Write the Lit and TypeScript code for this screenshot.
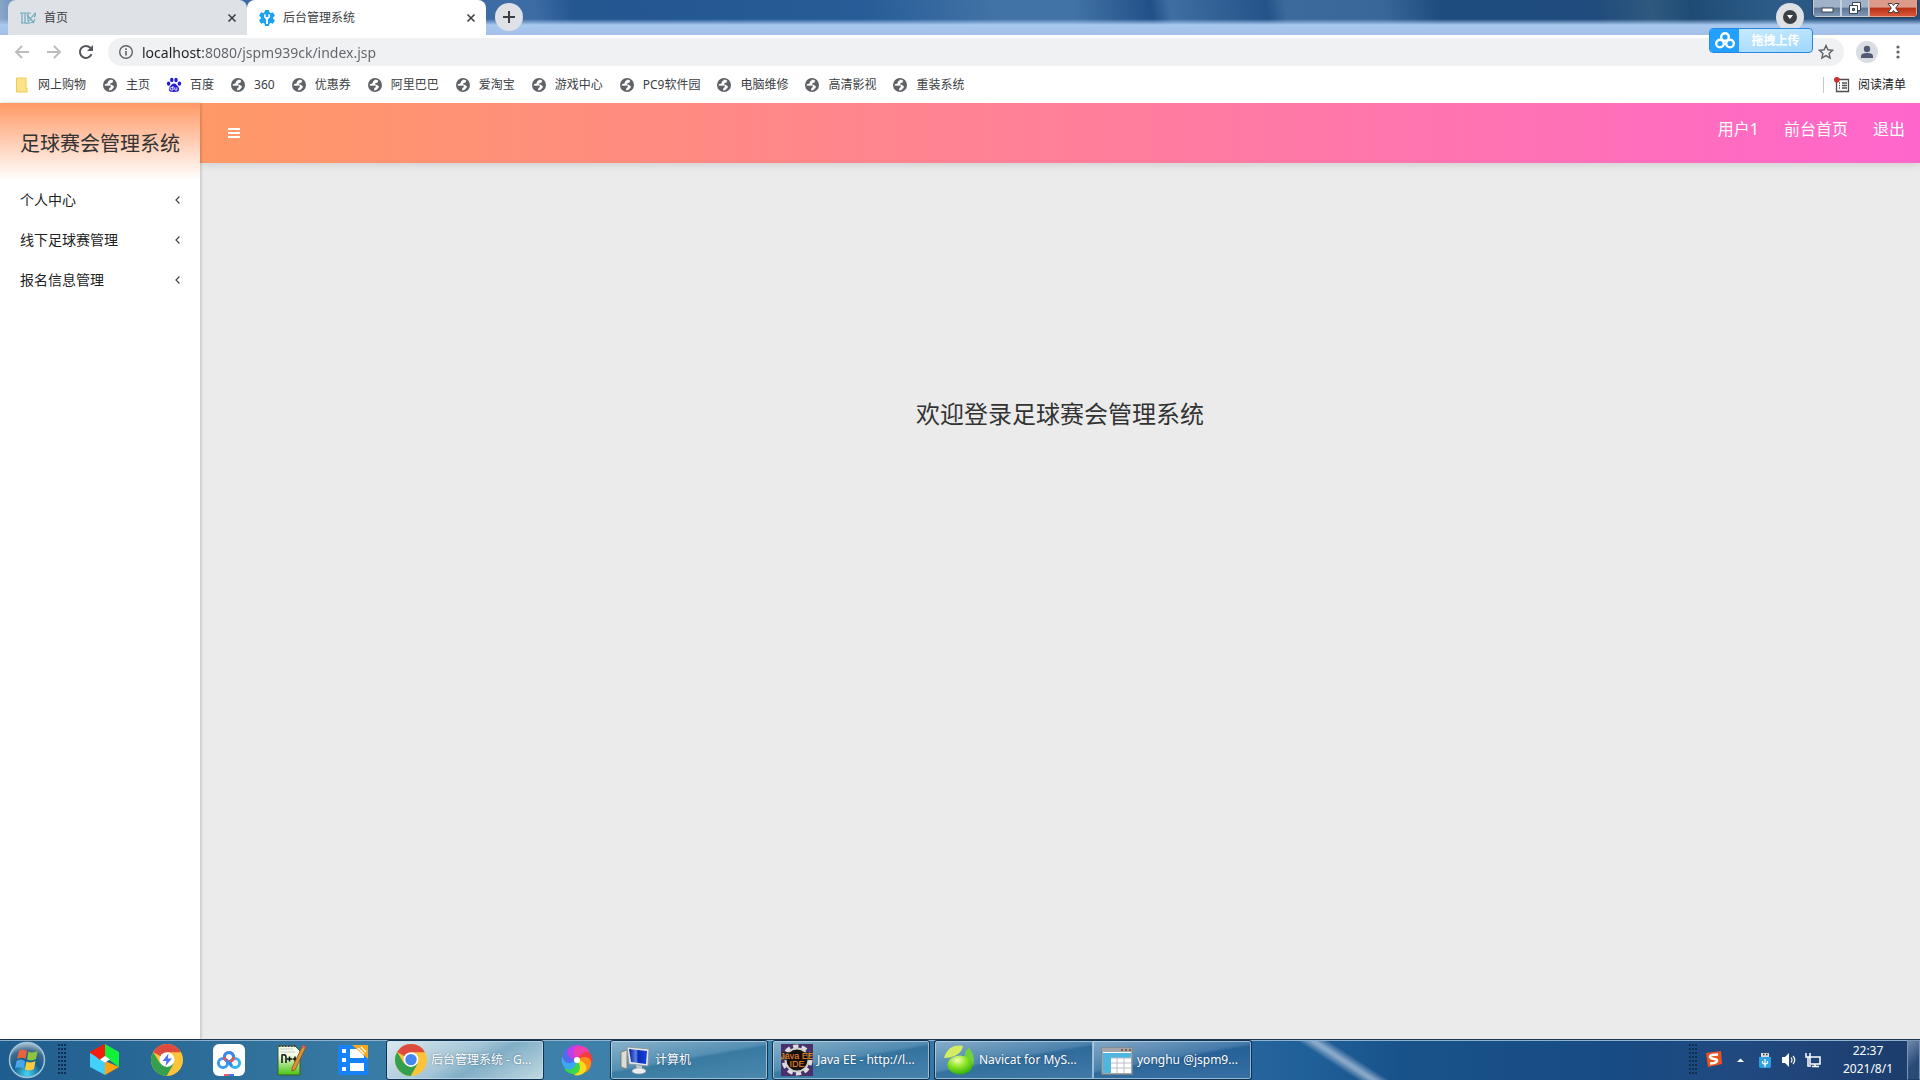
import { LitElement, html, svg, css } from "lit";
import { customElement } from "lit/decorators.js";

const globe = html`<svg class="ico16" viewBox="0 0 16 16" aria-hidden="true">
  <circle cx="8" cy="8" r="7" fill="#5f6368"/>
  <path d="M8.6 2.6 6.2 4.2 5.4 6.4 3 7.2 2.6 8.6 5 8.8 8.4 8.6 9 10 7.4 11 7 13.4 9.4 13 11.4 11 12 9.4 9.8 7.8 8 7.4 8.4 6.2 10.6 5.4 11.2 3.6Z" fill="#fff"/>
</svg>`;

const folder = html`<svg class="ico16" viewBox="0 0 16 16" aria-hidden="true">
  <path d="M2.5 1h9.5v10h1v4H2.5z" fill="#fde28a" stroke="#ecc94f" stroke-width="1"/>
</svg>`;

const paw = html`<svg class="ico16" viewBox="0 0 16 16" aria-hidden="true">
  <g fill="#2319dc">
    <ellipse cx="2.6" cy="6.6" rx="1.7" ry="2.2"/><ellipse cx="5.8" cy="3" rx="1.7" ry="2.3"/>
    <ellipse cx="10" cy="3" rx="1.7" ry="2.3"/><ellipse cx="13.4" cy="6.6" rx="1.7" ry="2.2"/>
    <path d="M8 6.4c2 0 2.6 1.800 4 3.200 1.600 1.500 1.600 5-1 5.200-1.400.1-4.600.1-6 0-2.600-.2-2.600-3.700-1-5.200C5.400 8.200 6 6.400 8 6.400z"/>
  </g>
  <path d="M7 9v4H5.200a1.100 1.100 0 0 1 0-2.400H7M8.800 10.400v1.800q0 .9.900.9h1.200v-2.700" fill="none" stroke="#fff" stroke-width=".9"/>
</svg>`;

const closeX = html`<svg class="ico10" viewBox="0 0 10 10" aria-hidden="true"><path d="M1.500 1.500l7 7m0-7l-7 7" stroke="#3c4043" stroke-width="1.600"/></svg>`;

const gear = html`<svg class="ico16" viewBox="0 0 16 16" aria-hidden="true">
  <g fill="#1ba1f2">
    <circle cx="8" cy="8" r="6.200"/>
    ${[0, 60, 120, 180, 240, 300].map((a) => svg`<path d="M5.400 3 6 0h4l.6 3z" transform="rotate(${a} 8 8)"/>`)}
  </g>
  <path d="M5 4.600v2.600L7 9.300V14h2V9.300l2-2.100V4.600L9.300 4.300V7H6.700V4.300z" fill="#fff"/>
</svg>`;

const chromeLogo = (bolt: boolean) => html`<svg class="ico32" viewBox="0 0 32 32" aria-hidden="true">
  <circle cx="16" cy="16" r="16" fill="#fbc43a"/>
  <path d="M16 16 2.140 8A16 16 0 0 1 29.900 8.200H16z" fill="#df4a3e"/>
  <path d="M2.140 8A16 16 0 0 0 15.600 32L22.500 20 16 16 9.300 19.800z" fill="#34a04e"/>
  <circle cx="16" cy="15.600" r="7.400" fill="#fff"/>
  ${bolt
    ? svg`<path d="M17.500 9.500 11.500 17h4l-1 5 6.500-7.500h-4.200z" fill="#4a73f2"/>`
    : svg`<circle cx="16" cy="15.600" r="5.700" fill="#4688f1"/>`}
</svg>`;

const cloud = html`<svg class="ico32" viewBox="0 0 32 32" aria-hidden="true">
  <rect width="32" height="32" rx="6" fill="#fff"/>
  <g fill="none" stroke-width="3"><circle cx="10" cy="19" r="4.600" stroke="#3a9cf0"/><circle cx="22" cy="19" r="4.600" stroke="#35b4f2"/><circle cx="16" cy="13" r="4.600" stroke="#e8505c"/><path d="M11.400 13a4.600 4.600 0 0 1 9.200 0M13.500 16 19 22" stroke="#2f8ff0"/></g>
  <path d="M11 30h5v2h-5z" fill="#ef5b62"/><path d="M16 30h5v2h-5z" fill="#3a7cf0"/>
</svg>`;

const cube = html`<svg class="ico32" viewBox="0 0 32 32" aria-hidden="true">
  <path d="M16 0 1 8v9l15-4z" fill="#f21d0c"/><path d="M16 0l14 8v15L16 13z" fill="#12f03c"/>
  <path d="M30 23l-14 8V17z" fill="#ffa20d"/><path d="M1 9l15 8v14L1 23z" fill="#43d0fb"/>
  <path d="M1 8l10 8 5-3.500V0z" fill="#f21d0c"/>
  <path d="M16 12l5 3.500-5 3-5-3z" fill="#fff"/>
</svg>`;

const notepad = html`<svg class="ico32" viewBox="0 0 32 32" aria-hidden="true">
  <defs><linearGradient id="np" x2="0" y2="1"><stop offset="0.300" stop-color="#f4fbe8"/><stop offset="1" stop-color="#47c40e"/></linearGradient></defs>
  <path d="M3 2h17l5 5v24H3z" fill="url(#np)" stroke="#3a5c30" stroke-width="1"/>
  <path d="M5 5h13M5 8h15" stroke="#c8c8c8"/><path d="M4 2h18" stroke="#444" stroke-width="2" stroke-dasharray="1.500 1.500"/>
  <path d="M7 19v-8q4-1 4 2v6M12 15h5m-2.500-2.500v5M17.500 15h5M20 12.500v5" fill="none" stroke="#111" stroke-width="1.500"/>
  <path d="M28 1l3 2-11 23-3 1 0-3z" fill="#dd9436" stroke="#855018" stroke-width=".8"/><path d="M28 1l3 2-1 2-3-2z" fill="#d95c60"/>
</svg>`;

const film = html`<svg class="ico32" viewBox="0 0 32 32" aria-hidden="true">
  <rect x="1" y="1" width="30" height="30" rx="2" fill="#1682f7"/>
  <path d="M5 5h4v4H5zM5 14h4v4H5zM5 23h4v4H5zM13 5h8l6 7v2H13zM13 19h14v8H13z" fill="#fff"/>
  <path d="M15 1h16v14z" fill="#f6a81d"/><path d="M21 4l6 6M24 3l5 5" stroke="#fff" stroke-width="1.400"/>
</svg>`;

const petals = ["#f33e3d", "#ff8a19", "#f7dc17", "#38d84a", "#3aa8f0", "#5868ee", "#c33de8", "#f03fa8"];
const pinwheel = html`<svg class="ico32" viewBox="0 0 32 32" aria-hidden="true">
  ${petals.map((c, i) => svg`<path d="M16 16C17 8 23 4 28 8c3 3 4 7 3 11-4-4-9-5-15-3z" fill=${c} transform="rotate(${i * 45} 16 16)"/>`)}
  <circle cx="16" cy="16" r="3" fill="#fff"/>
</svg>`;

const computer = html`<svg class="ico32" viewBox="0 0 32 32" aria-hidden="true">
  <defs><linearGradient id="scr"><stop offset="0" stop-color="#0a1c90"/><stop offset=".4" stop-color="#5c86ec"/><stop offset=".5" stop-color="#0b2bb8"/><stop offset="1" stop-color="#1742d8"/></linearGradient></defs>
  <path d="M2 8l6-2v19l-6-2z" fill="#dcdcd4" stroke="#75756e" stroke-width=".8"/>
  <path d="M8 3l22 2-1 17L10 20z" fill="#e4e8ea" stroke="#8a9096" stroke-width=".8"/>
  <path d="M10 5l18 2-1 13-15-2z" fill="url(#scr)"/>
  <path d="M17 21l6 1v4h-5z" fill="#c8ccd0"/><ellipse cx="20" cy="27" rx="7" ry="3" fill="#eceeee" stroke="#9a9fa3" stroke-width=".6"/>
</svg>`;

const javaEE = html`<svg class="ico32" viewBox="0 0 32 32" aria-hidden="true">
  <rect width="32" height="32" fill="#47306b"/>
  <circle cx="16" cy="16" r="13" fill="none" stroke="#dedede" stroke-width="5" stroke-dasharray="5 3.170"/>
  <circle cx="16" cy="16" r="11.500" fill="#17130f" stroke="#d0d0d0" stroke-width="2"/>
  <path d="M1 8h30v8H1z" fill="#17130f" opacity=".7"/>
  <text class="glyph" x="16" y="15" text-anchor="middle" fill="#ff8a1c" font-size="9">Java EE</text>
  <text class="glyph" x="16" y="23" text-anchor="middle" fill="#ff8a1c" font-size="9">IDE</text>
</svg>`;

const navicat = html`<svg class="ico32" viewBox="0 0 32 32" aria-hidden="true">
  <defs><radialGradient id="nv" cx=".4" cy=".25" r=".8"><stop offset="0" stop-color="#f0ffb4"/><stop offset=".45" stop-color="#8fe526"/><stop offset="1" stop-color="#24a70b"/></radialGradient></defs>
  <path d="M1 14C4 4 11 0 20 2c-1 6-7 12-19 12z" fill="#d4ec62"/>
  <path d="M22 13c-1-4 1-7 4-9 4 4 6 10 4 18z" fill="#6fd43c"/>
  <ellipse cx="17" cy="21" rx="12.500" ry="9.500" fill="url(#nv)"/>
</svg>`;

const table = html`<svg class="ico32" viewBox="0 0 32 32" aria-hidden="true">
  <rect x="1" y="4" width="30" height="26" fill="#fff" stroke="#84888d" stroke-width="1.500"/>
  <path d="M1 4h30v4H1z" fill="#a6a5a8"/><path d="M2 9h28v5H10v15H2z" fill="#4eb6df"/>
  <path d="M20 6h2m2 0h2m2 0h2" stroke="#7d3e38" stroke-width="1.500"/>
  <path d="M10 14h20M10 19h20M10 24h20M16 14v15M23 14v15" stroke="#b9bec6"/>
</svg>`;

const startOrb = html`<svg class="orb" viewBox="0 0 38 38" aria-hidden="true">
  <defs><radialGradient id="orb" cx=".5" cy=".9" r=".9"><stop offset="0" stop-color="#46d6f5"/><stop offset=".45" stop-color="#145d8e"/><stop offset=".75" stop-color="#3f6b8c"/><stop offset="1" stop-color="#b7cbd8"/></radialGradient></defs>
  <circle cx="19" cy="19" r="17.500" fill="url(#orb)" stroke="#9fc3d8" stroke-width="1.500"/>
  <path d="M11 10q4-3 8 0l-1.500 8q-4-2.500-8.500 0z" fill="#e8633a"/><path d="M20.500 10.500q4 2 9-.5l-1.500 8q-4 2.500-9 .5z" fill="#8cc63d"/>
  <path d="M8.500 20q4-3 8.500 0l-1.500 7.500q-4-2.500-8.500 0z" fill="#4aa6e8"/><path d="M18.500 20.500q4 2 9-.5L26 28q-4 2.500-9 .5z" fill="#fbcb3b"/>
</svg>`;

const bookmarks: [string, unknown][] = [
  ["网上购物", folder], ["主页", globe], ["百度", paw], ["360", globe], ["优惠券", globe],
  ["阿里巴巴", globe], ["爱淘宝", globe], ["游戏中心", globe], ["PC9软件园", globe],
  ["电脑维修", globe], ["高清影视", globe], ["重装系统", globe],
];

const base = css`
  * { box-sizing: border-box; }
  button { border: 0; padding: 0; margin: 0; background: none; font: inherit; color: inherit; cursor: pointer; }
  a { color: inherit; text-decoration: none; }
  svg { display: block; flex: none; }
  .ico10 { width: 10px; height: 10px; }
  .ico16 { width: 16px; height: 16px; }
  .ico20 { width: 20px; height: 20px; }
  .ico32 { width: 32px; height: 32px; }
`;

@customElement("browser-chrome")
class BrowserChrome extends LitElement {
  static styles = [base, css`
    :host { display: block; position: relative; background: #fff; color: #3c4043; font-size: 12px; line-height: 20px; }
    .titlebar {
      display: flex; align-items: flex-start; height: 35px; padding-left: 8px;
      background:
        linear-gradient(to bottom, transparent 19px, #a9c9ef 25px, #a3bfe8 35px),
        linear-gradient(80deg, #8fa9cc 0%, #3c6ca5 3%, #3d6ca4 28%, #245690 30%, #265c97 45%, #4273a6 52%, #4273a6 56%, #205087 60%, #3f6ea1 61%, #235389 66%, #3d6a9c 67%, #3a6799 72%, #1f4c7e 75%, #1f4b7d 83%, #30597f 86%, #1e4b75 88%, #2d5b88 92%, #284f7c 100%);
    }
    .tabs { display: flex; }
    .tab { display: flex; align-items: center; gap: 8px; width: 239px; height: 35px; padding: 0 10px 0 12px; border-radius: 8px 8px 0 0; background: #dee1e6; }
    .tab.active { background: #fff; }
    .tab span { flex: 1; }
    .new, .search { width: 28px; height: 28px; margin-top: 3px; border-radius: 50%; background: #dee1e6; display: grid; place-items: center; }
    .new { margin-left: 9px; }
    .right { display: flex; margin-left: auto; gap: 8px; padding-right: 2px; }
    .window { display: flex; height: 18px; border: 1px solid #2b3c50; border-top: 0; border-radius: 0 0 5px 5px; overflow: hidden; }
    .window button { display: grid; place-items: center; width: 28px; border: 1px solid #c3d0de; border-top: 0; background: linear-gradient(#9fb2c8 45%, #5b7593 50%, #7d97b4); }
    .window .shut { width: 48px; border-color: #e5a394; background: linear-gradient(#dc9a88 45%, #b92f14 50%, #d8573a); }
    .toolbar { display: flex; align-items: center; gap: 12px; height: 34px; padding: 0 14px 0 12px; }
    .nav { width: 20px; height: 20px; display: grid; place-items: center; }
    .address { flex: 1; display: flex; align-items: center; height: 28px; padding: 0 10px; border-radius: 14px; background: #f0f1f3; }
    .url {
      flex: 1; min-width: 0; height: 24px; margin-left: 8px; padding: 0; border: 0; outline: 0;
      font: inherit; font-size: 14px; color: transparent;
      background: linear-gradient(to right, #202124 61px, #5f6368 61px); background-clip: text; -webkit-background-clip: text;
    }
    .avatar { width: 22px; height: 22px; border-radius: 50%; background: #dadce3; overflow: hidden; }
    .marks { display: flex; align-items: center; gap: 16px; height: 34px; padding: 0 14px 3px; }
    .marks a { display: flex; align-items: center; gap: 8px; }
    .marks .list { margin-left: auto; padding-left: 10px; border-left: 1px solid #c6c8cb; height: 16px; color: #202124; }
    .upload { position: absolute; right: 107px; top: 28px; display: flex; width: 104px; height: 25px; border: 1px solid #2b87dd; border-radius: 4px; overflow: hidden; background: linear-gradient(170deg, #cdecfe, #9fd8ff); color: #fff; font-weight: 700; line-height: 23px; }
    .upload i { display: grid; place-items: center; width: 29px; height: 23px; background: #22a0ff; }
    .upload span { flex: 1; text-align: center; }
  `];

  render() {
    return html`
      <div class="titlebar">
        <div class="tabs">
          <div class="tab">
            <svg class="ico16" viewBox="0 0 16 16" aria-hidden="true"><path d="M0 3h11M2 3v10m3-10v10m-4 0h9M8 3v8M7 5l7 8m1-10-7 9m7-9q2 1-1 4m-9 6q9 1 10-4" fill="none" stroke="#6faabb" stroke-width="1.200"/></svg>
            <span>首页</span><button aria-label="关闭标签页">${closeX}</button>
          </div>
          <div class="tab active">
            ${gear}
            <span>后台管理系统</span><button aria-label="关闭标签页">${closeX}</button>
          </div>
        </div>
        <button class="new" aria-label="新标签页"><svg class="ico16" viewBox="0 0 16 16"><path d="M8 2v12M2 8h12" stroke="#3c4043" stroke-width="2"/></svg></button>
        <div class="right">
          <button class="search" aria-label="搜索标签页"><svg class="ico16" viewBox="0 0 16 16"><circle cx="8" cy="8" r="7" fill="#3c4043"/><path d="M5 6h6l-3 4z" fill="#fff"/></svg></button>
          <div class="window">
            <button aria-label="最小化"><svg class="ico16" viewBox="0 0 16 16"><rect x="3" y="8" width="11" height="4" fill="#fff" stroke="#3b4654"/></svg></button>
            <button aria-label="还原"><svg class="ico16" viewBox="0 0 16 16"><path d="M5.500 2.500h8v8h-8z" fill="#fff" stroke="#3b4654"/><path d="M2.500 5.500h8v8h-8z" fill="#fff" stroke="#3b4654"/><path d="M5.500 8.500h2v2h-2z" fill="#6b8098" stroke="#3b4654"/></svg></button>
            <button class="shut" aria-label="关闭"><svg class="ico16" viewBox="0 0 16 16"><path d="M3 3.500h4l1.500 2 1.500-2h4L10.700 8l3.300 4.500h-4l-1.500-2-1.500 2H3L6.300 8z" fill="#fff" stroke="#4b3a40"/></svg></button>
          </div>
        </div>
      </div>
      <div class="toolbar">
        <button class="nav" aria-label="后退"><svg class="ico16" viewBox="0 0 16 16"><path d="M15 8H2m6-6L2 8l6 6" fill="none" stroke="#babcbe" stroke-width="1.800"/></svg></button>
        <button class="nav" aria-label="前进"><svg class="ico16" viewBox="0 0 16 16"><path d="M1 8h13M8 2l6 6-6 6" fill="none" stroke="#babcbe" stroke-width="1.800"/></svg></button>
        <button class="nav" aria-label="重新加载"><svg class="ico16" viewBox="0 0 16 16"><path d="M13.500 10.200A6 6 0 1 1 12.300 3.800L14 5.500" fill="none" stroke="#54575b" stroke-width="2"/><path d="M15 1v6H9z" fill="#54575b"/></svg></button>
        <div class="address">
          <svg class="ico16" viewBox="0 0 16 16" aria-hidden="true"><circle cx="8" cy="8" r="6.300" fill="none" stroke="#5f6368" stroke-width="1.400"/><path d="M8 7v4.500M8 4.300v1.700" stroke="#5f6368" stroke-width="1.600"/></svg>
          <input class="url" type="text" aria-label="地址" value="localhost:8080/jspm939ck/index.jsp">
          <button aria-label="收藏"><svg class="ico16" viewBox="0 0 16 16"><path d="M8 1.500l1.900 4.300 4.700.5-3.500 3.100 1 4.600L8 11.600 3.900 14l1-4.600L1.400 6.300l4.700-.5z" fill="none" stroke="#5f6368" stroke-width="1.400"/></svg></button>
        </div>
        <button class="avatar" aria-label="用户"><svg viewBox="0 0 22 22"><circle cx="11" cy="8" r="3.200" fill="#505a73"/><path d="M5 17v-2q0-3 6-3t6 3v2z" fill="#505a73"/></svg></button>
        <button aria-label="菜单"><svg class="ico16" viewBox="0 0 16 16"><g fill="#5f6368"><circle cx="8" cy="3" r="1.600"/><circle cx="8" cy="8" r="1.600"/><circle cx="8" cy="13" r="1.600"/></g></svg></button>
      </div>
      <nav class="marks">
        ${bookmarks.map(([name, icon]) => html`<a href="#">${icon}${name}</a>`)}
        <a class="list" href="#"><svg class="ico16" viewBox="0 0 16 16" aria-hidden="true"><path d="M2.500 2.500h12v12h-12zM5 6h1m2 0h5M5 8.500h1m2 0h5M5 11h1m2 0h5" fill="none" stroke="#4b4e52" stroke-width="1.300"/><circle cx="2.800" cy="2.800" r="2.800" fill="#c9302c"/></svg>阅读清单</a>
      </nav>
      <button class="upload"><i><svg class="ico20" viewBox="0 0 20 20"><g fill="none" stroke="#fff" stroke-width="2.400"><circle cx="10" cy="6" r="3.800"/><circle cx="5" cy="12.500" r="3.800"/><circle cx="15" cy="12.500" r="3.800"/></g></svg></i><span>拖拽上传</span></button>
    `;
  }
}

@customElement("admin-page")
class AdminPage extends LitElement {
  static styles = [base, css`
    :host { display: grid; grid-template-columns: 200px 1fr; background: #ebebeb; color: #333; }
    aside { position: relative; background: #fff; box-shadow: 1px 0 3px rgba(0, 0, 0, .2); }
    h1 { margin: 0; height: 77px; padding: 4px 20px 0; font-size: 20px; font-weight: 400; line-height: 74px; background: linear-gradient(#ff9966, #fff); white-space: nowrap; }
    .item { display: flex; justify-content: space-between; align-items: center; width: 100%; height: 40px; padding: 0 20px 2px; font-size: 14px; color: #222; }
    .body { display: flex; flex-direction: column; }
    header { display: flex; justify-content: space-between; height: 60px; padding: 0 15px 0 25px; background: linear-gradient(to right, #ff9966, #ff66cc); color: #fff; font-size: 16px; box-shadow: 0 2px 8px rgba(0, 0, 0, .12); }
    nav { display: flex; gap: 25px; line-height: 52px; }
    main { flex: 1; padding: 233px 0 0; text-align: center; }
    h2 { margin: 0; font-size: 24px; font-weight: 400; line-height: 36px; }
  `];

  render() {
    return html`
      <aside>
        <h1>足球赛会管理系统</h1>
        ${["个人中心", "线下足球赛管理", "报名信息管理"].map((name) => html`
          <button class="item">${name}<svg width="6" height="10" viewBox="0 0 6 10" aria-hidden="true"><path d="M5.500 2.500 2 6 5.500 9.500" fill="none" stroke="#444" stroke-width="1.200"/></svg></button>`)}
      </aside>
      <div class="body">
        <header>
          <button aria-label="切换菜单"><svg class="ico16" viewBox="0 0 16 16"><path d="M3 4h12M3 8h12M3 12h12" stroke="#fff" stroke-width="2"/></svg></button>
          <nav><a href="#">用户1</a><a href="#">前台首页</a><a href="#">退出</a></nav>
        </header>
        <main><h2>欢迎登录足球赛会管理系统</h2></main>
      </div>`;
  }
}

@customElement("task-bar")
class TaskBar extends LitElement {
  static styles = [base, css`
    :host {
      display: flex; align-items: stretch; height: 40px; color: #fff; font-size: 12px; line-height: 18px;
      border-top: 1px solid #1d3550; box-shadow: inset 0 1px 0 #8fb2cf;
      background:
        linear-gradient(33deg, transparent 68.500%, rgba(180, 200, 222, .7) 69.200%, rgba(180, 200, 222, .7) 69.400%, transparent 70.100%),
        linear-gradient(to right, #1f5d8e 0, #2c6c98 10%, #3e82a9 24%, #3b7ea8 42%, #2f6ba0 60%, #20609a 68%, #19528a 73%, #174b83 84%, #21497f 91%, #1b3c6c 100%);
    }
    .orb { width: 38px; height: 38px; }
    .start { padding: 0 12px 0 8px; }
    .grip { align-self: center; width: 9px; height: 32px; background: radial-gradient(circle at 1px 1px, #0d2f52 1px, transparent 1px) 0 0 / 3px 4px; }
    .pin { width: 62px; display: grid; place-items: center; }
    .pins { display: flex; padding: 0 2px 0 7px; }
    .tasks { display: flex; gap: 4px; }
    .tasks .pin { width: 58px; }
    .task { display: flex; align-items: center; gap: 4px; width: 158px; padding: 0 8px; text-align: left; white-space: nowrap; border: 1px solid #12324f; border-radius: 3px; box-shadow: inset 0 0 0 1px rgba(200, 225, 240, .65); background: linear-gradient(170deg, rgba(255, 255, 255, .4), rgba(255, 255, 255, .13) 45%, rgba(0, 0, 0, .04) 50%, rgba(255, 255, 255, .08)); text-shadow: 0 0 2px rgba(0, 20, 50, .5); }
    .task.active { background: linear-gradient(150deg, #dbe9ef, #a4c5d6 45%, #80aec6 60%, #c2dae2); }
    .pair { display: flex; }
    .pair .task { width: 159px; }
    .pair .task:first-child { border-right: 0; border-radius: 3px 0 0 3px; }
    .pair .task:last-child { border-left: 0; border-radius: 0 3px 3px 0; }
    .glyph { font-family: "Liberation Sans", sans-serif; }
    .tray { display: flex; align-items: center; margin-left: auto; }
    .icons { display: flex; align-items: center; gap: 8px; padding: 0 20px 0 7px; }
    time { display: block; width: 54px; text-align: center; }
    .show { align-self: stretch; width: 13px; margin-left: 12px; border: 1px solid #7c95b3; border-bottom-color: #203c62; background: linear-gradient(135deg, #7089aa, #284b78 60%); }
  `];

  render() {
    const task = (icon: unknown, name: string, cls = "") => html`<button class="task ${cls}">${icon}${name}</button>`;
    return html`
      <button class="start" aria-label="开始">${startOrb}</button>
      <div class="grip"></div>
      <div class="pins">
        ${[cube, chromeLogo(true), cloud, notepad, film].map((icon) => html`<button class="pin">${icon}</button>`)}
      </div>
      <div class="tasks">
        ${task(chromeLogo(false), "后台管理系统 - G...", "active")}
        <button class="pin">${pinwheel}</button>
        ${task(computer, "计算机")}
        ${task(javaEE, "Java EE - http://l...")}
        <div class="pair">${task(navicat, "Navicat for MyS...")}${task(table, "yonghu @jspm9...")}</div>
      </div>
      <div class="tray">
        <div class="grip"></div>
        <div class="icons">
          <svg class="ico20" viewBox="0 0 20 20" aria-hidden="true"><path d="M1 3l15-2 1 13-14 3z" fill="#e8531f"/><path d="M13 4.500 7 5q-2.500.5-2 2t3 1.700l2.500.5q2 .7 1.500 2T9 13l-4 .5" fill="none" stroke="#fff" stroke-width="2.400"/></svg>
          <svg class="ico16" viewBox="0 0 16 16" aria-hidden="true"><path d="M4 10 7.500 6.500 11 10z" fill="#fff"/></svg>
          <svg class="ico16" viewBox="0 0 16 16" aria-hidden="true"><path d="M4 1h8v4H4z" fill="#d9dde0"/><path d="M6 2.500h1.500M9 2.500h1.500" stroke="#333" stroke-width="1.500"/><path d="M2 5h12v9q0 2-2 2H4q-2 0-2-2z" fill="#2da0e4"/><path d="M8 7v8M5.500 9v2L8 12.500 10.500 11V9" fill="none" stroke="#fff" stroke-width="1.200"/></svg>
          <svg class="ico16" viewBox="0 0 16 16" aria-hidden="true"><path d="M1 5h3l4-4v14l-4-4H1z" fill="#fff"/><path d="M10 5.500q2 2.500 0 5M12 4q3.500 4 0 8" fill="none" stroke="#fff" stroke-width="1.200"/></svg>
          <svg class="ico16" viewBox="0 0 16 16" aria-hidden="true"><path d="M5 5h10v7H5zM7 14.500h7M10 12v2.500" fill="none" stroke="#fff" stroke-width="1.500"/><path d="M1 1v4h4V1M3 5v9h3" fill="none" stroke="#fff" stroke-width="1.500"/></svg>
        </div>
        <time>22:37<br>2021/8/1</time>
        <button class="show" aria-label="显示桌面"></button>
      </div>`;
  }
}

@customElement("app-root")
class AppRoot extends LitElement {
  static styles = css`
    :host { display: flex; flex-direction: column; min-height: 100vh; font-family: "Noto Sans", "Noto Sans CJK SC", sans-serif; }
    admin-page { flex: 1; }
  `;

  render() {
    return html`<browser-chrome></browser-chrome><admin-page></admin-page><task-bar></task-bar>`;
  }
}
